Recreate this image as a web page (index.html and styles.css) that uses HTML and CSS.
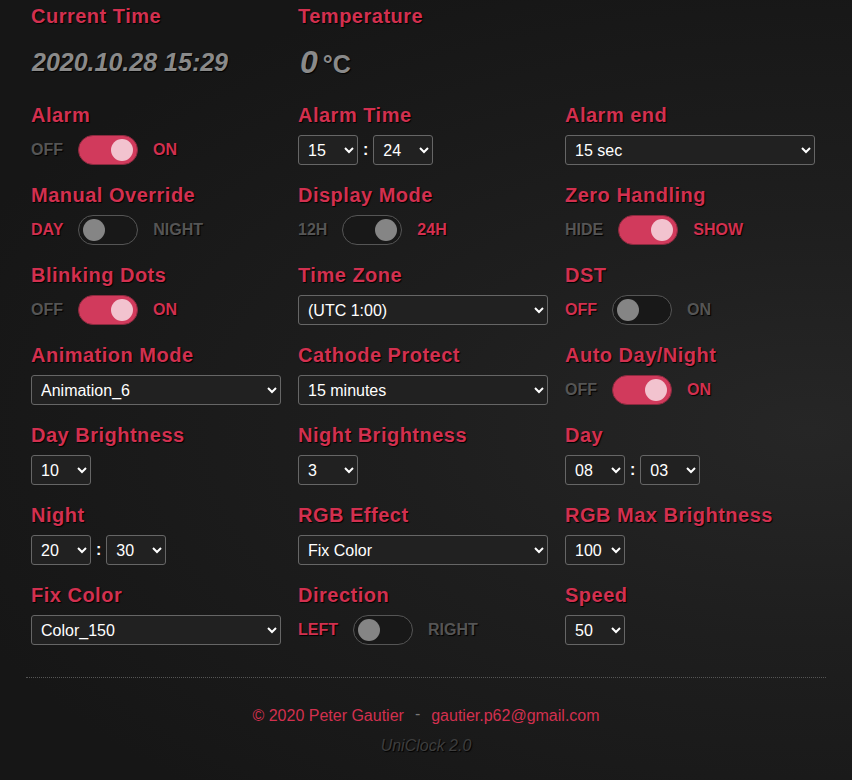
FILE: index.html
```html
<!DOCTYPE html>
<html>
<head>
<meta charset="utf-8">
<link rel="stylesheet" href="styles.css">
</head>
<body>
<div class="page">
  <div class="grid">
    <div class="cell top">
      <div class="label">Current Time</div>
      <div class="bigval">2020.10.28 15:29</div>
    </div>
    <div class="cell top">
      <div class="label">Temperature</div>
      <div class="bigval"><span class="temp">0</span><span class="unit">°C</span></div>
    </div>
    <div class="cell top"></div>

    <div class="cell">
      <div class="label">Alarm</div>
      <div class="ctl"><span class="opt">OFF</span><span class="sw on"><span class="knob"></span></span><span class="opt act">ON</span></div>
    </div>
    <div class="cell">
      <div class="label">Alarm Time</div>
      <div class="ctl"><select class="sm"><option>15</option></select><span class="colon">:</span><select class="sm"><option>24</option></select></div>
    </div>
    <div class="cell">
      <div class="label">Alarm end</div>
      <div class="ctl"><select class="wide"><option>15 sec</option></select></div>
    </div>

    <div class="cell">
      <div class="label">Manual Override</div>
      <div class="ctl"><span class="opt act">DAY</span><span class="sw"><span class="knob"></span></span><span class="opt">NIGHT</span></div>
    </div>
    <div class="cell">
      <div class="label">Display Mode</div>
      <div class="ctl"><span class="opt">12H</span><span class="sw right"><span class="knob"></span></span><span class="opt act">24H</span></div>
    </div>
    <div class="cell">
      <div class="label">Zero Handling</div>
      <div class="ctl"><span class="opt">HIDE</span><span class="sw on"><span class="knob"></span></span><span class="opt act">SHOW</span></div>
    </div>

    <div class="cell">
      <div class="label">Blinking Dots</div>
      <div class="ctl"><span class="opt">OFF</span><span class="sw on"><span class="knob"></span></span><span class="opt act">ON</span></div>
    </div>
    <div class="cell">
      <div class="label">Time Zone</div>
      <div class="ctl"><select class="wide"><option>(UTC 1:00)</option></select></div>
    </div>
    <div class="cell">
      <div class="label">DST</div>
      <div class="ctl"><span class="opt act">OFF</span><span class="sw"><span class="knob"></span></span><span class="opt">ON</span></div>
    </div>

    <div class="cell">
      <div class="label">Animation Mode</div>
      <div class="ctl"><select class="wide"><option>Animation_6</option></select></div>
    </div>
    <div class="cell">
      <div class="label">Cathode Protect</div>
      <div class="ctl"><select class="wide"><option>15 minutes</option></select></div>
    </div>
    <div class="cell">
      <div class="label">Auto Day/Night</div>
      <div class="ctl"><span class="opt">OFF</span><span class="sw on"><span class="knob"></span></span><span class="opt act">ON</span></div>
    </div>

    <div class="cell">
      <div class="label">Day Brightness</div>
      <div class="ctl"><select class="sm"><option>10</option></select></div>
    </div>
    <div class="cell">
      <div class="label">Night Brightness</div>
      <div class="ctl"><select class="sm"><option>3</option></select></div>
    </div>
    <div class="cell">
      <div class="label">Day</div>
      <div class="ctl"><select class="sm"><option>08</option></select><span class="colon">:</span><select class="sm"><option>03</option></select></div>
    </div>

    <div class="cell">
      <div class="label">Night</div>
      <div class="ctl"><select class="sm"><option>20</option></select><span class="colon">:</span><select class="sm"><option>30</option></select></div>
    </div>
    <div class="cell">
      <div class="label">RGB Effect</div>
      <div class="ctl"><select class="wide"><option>Fix Color</option></select></div>
    </div>
    <div class="cell">
      <div class="label">RGB Max Brightness</div>
      <div class="ctl"><select class="sm"><option>100</option></select></div>
    </div>

    <div class="cell">
      <div class="label">Fix Color</div>
      <div class="ctl"><select class="wide"><option>Color_150</option></select></div>
    </div>
    <div class="cell">
      <div class="label">Direction</div>
      <div class="ctl"><span class="opt act">LEFT</span><span class="sw"><span class="knob"></span></span><span class="opt">RIGHT</span></div>
    </div>
    <div class="cell">
      <div class="label">Speed</div>
      <div class="ctl"><select class="sm"><option>50</option></select></div>
    </div>
  </div>

  <hr class="rule">
  <div class="footer">
    <div class="credits"><span>© 2020 Peter Gautier</span><span class="dash">-</span><span>gautier.p62@gmail.com</span></div>
    <div class="version">UniClock 2.0</div>
  </div>
</div>
</body>
</html>
```

FILE: styles.css
```css
html, body {
  margin: 0;
  padding: 0;
  height: 100%;
}
body {
  background: radial-gradient(ellipse at 95% 55%, #262626 0%, #1e1e1e 35%, #161616 80%);
  font-family: "Liberation Sans", Arial, sans-serif;
  color: #fff;
}
.page {
  width: 800px;
  margin: 0 auto;
  padding-top: 4px;
}
.grid {
  display: grid;
  grid-template-columns: repeat(3, 267px);
  padding-left: 5px;
}
.cell {
  height: 80px;
}
.cell.top {
  height: 99px;
}
.label {
  font-size: 20px;
  font-weight: bold;
  line-height: 24px;
  letter-spacing: 0.5px;
  color: #d2304f;
  text-shadow: 1px 1px 1px #000;
  margin-bottom: 8px;
}
.bigval {
  font-size: 25px;
  font-weight: bold;
  font-style: italic;
  color: #8a8a8a;
  text-shadow: 1px 1px 1px #000;
  line-height: 30px;
  margin-top: 19px;
  margin-left: 1px;
  display: flex;
  align-items: baseline;
}
.temp {
  font-size: 32px;
  margin-left: 1px;
  margin-right: 5px;
}
.unit {
  font-size: 25px;
  font-style: normal;
  font-weight: bold;
}
.ctl {
  display: flex;
  align-items: center;
  height: 30px;
}
.opt {
  font-size: 16px;
  font-weight: bold;
  color: #555;
  text-shadow: 1px 1px 1px #000;
}
.opt.act {
  color: #d2304f;
}
.sw {
  height: 28px;
  width: 50px;
  border: 1px solid #555;
  border-radius: 15px;
  background: #181818;
  margin: 0 15px 0 15px;
  display: flex;
  align-items: center;
  padding: 0 4px;
  box-sizing: content-box;
}
.sw .knob {
  width: 22px;
  height: 22px;
  border-radius: 50%;
  background: #858585;
}
.sw.right {
  justify-content: flex-end;
}
.sw.on {
  background: #d13a5c;
  border-color: #8a2a3e;
  justify-content: flex-end;
}
.sw.on .knob {
  background: #f2c3cf;
}
select {
  height: 30px;
  background-color: #212121;
  color: #fff;
  border: 1px solid #666;
  border-radius: 3px;
  font-family: "Liberation Sans", Arial, sans-serif;
  font-size: 16px;
  padding: 0 4px 0 5px;
  color-scheme: dark;
}
select.wide {
  width: 250px;
}
select.sm {
  width: 60px;
}
.colon {
  color: #fff;
  font-size: 16px;
  font-weight: bold;
  margin: 0 5px 0 5px;
}
.rule {
  border: none;
  border-top: 1px dotted #555;
  margin: 14px 0 0 0;
  height: 0;
}
.footer {
  text-align: center;
  padding-top: 28px;
}
.credits {
  font-size: 16px;
  color: #d2304f;
  line-height: 20px;
}
.dash {
  color: #777;
  margin: 0 11px;
  position: relative;
  top: -2px;
}
.version {
  font-size: 16px;
  font-style: italic;
  color: #3e3e3e;
  text-shadow: 1px 1px 1px #000;
  margin-top: 11px;
}
```
